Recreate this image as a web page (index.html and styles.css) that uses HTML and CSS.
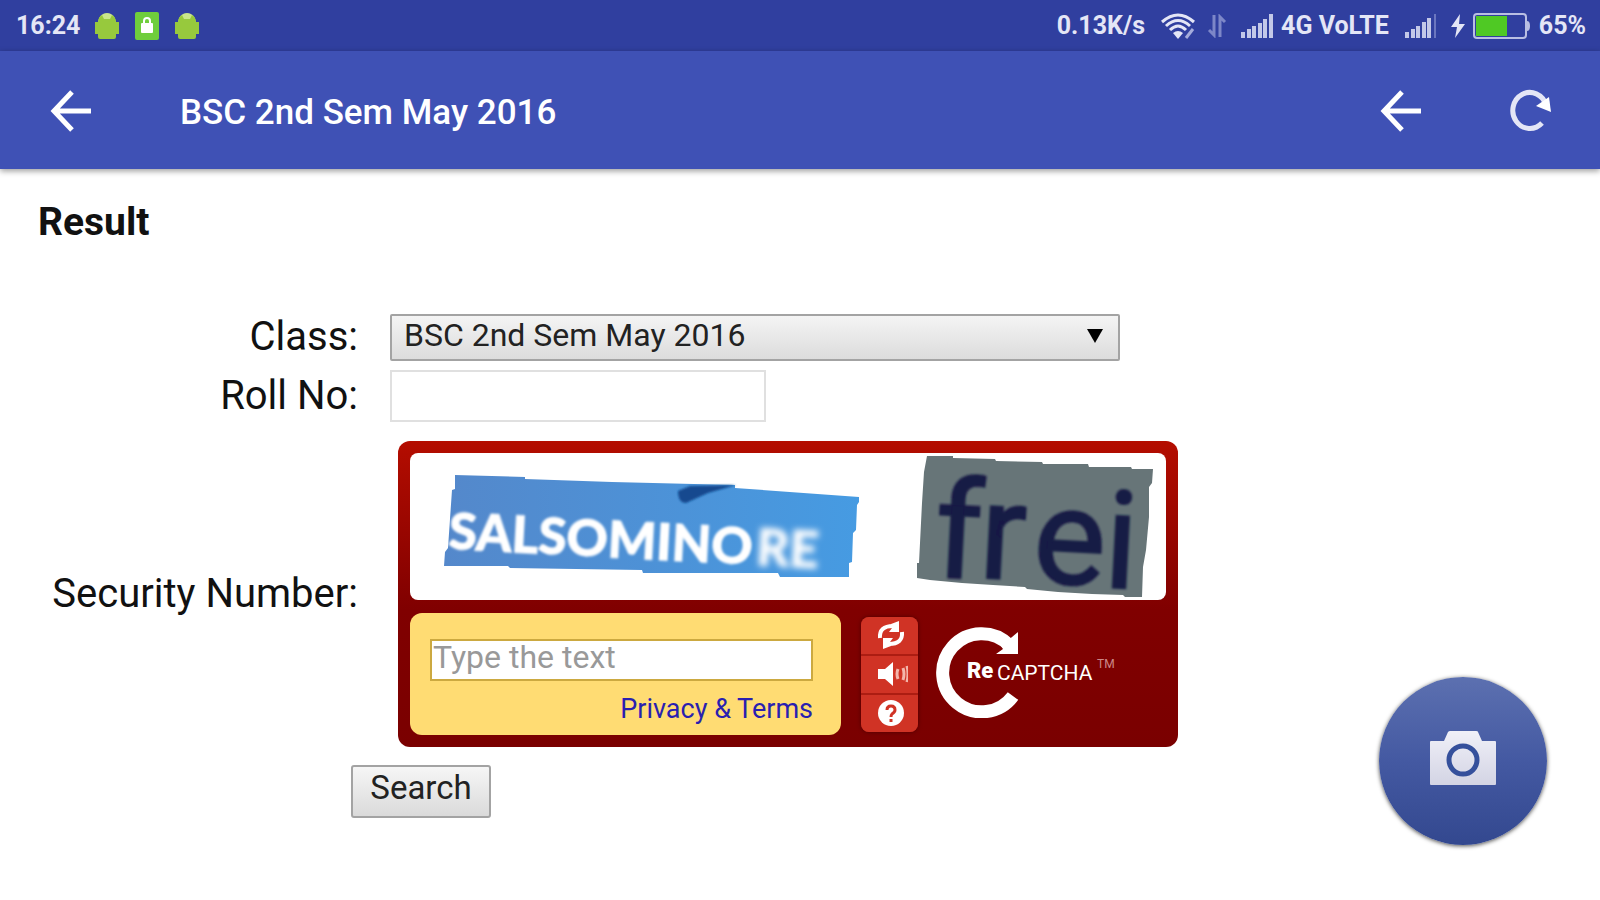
FILE: index.html
```html
<!DOCTYPE html>
<html lang="en">
<head>
    <meta charset="UTF-8">
    <meta name="viewport" content="width=device-width, initial-scale=1.0">
    <title>BSC 2nd Sem May 2016</title>
    <link rel="stylesheet" href="styles.css">
</head>
<body>
    <div class="status-bar">
        <div class="status-group">
            <span>16:24</span>
            <div class="notifications">
                <svg class="notif" viewBox="0 0 26 30">
                    <path fill="#c8e68a" d="M4 13C4 7 7 2 13 2s9 5 9 11z"/>
                    <path fill="#97c93d" d="M1 11h24v12h-3v3q0 2-2 2H6q-2 0-2-2v-3H1zM4 12q0-6 4-8l2 4h6l2-4q4 2 4 8z"/>
                </svg>
                <svg class="notif" viewBox="0 0 26 30">
                    <rect x="1" y="1" width="24" height="28" rx="2" fill="#6fce3c"/>
                    <path fill="none" stroke="#fff" stroke-width="2" d="M10 13V10a3 3 0 0 1 6 0v3"/>
                    <rect x="7" y="12" width="12" height="10" rx="1" fill="#fff"/>
                </svg>
                <svg class="notif" viewBox="0 0 26 30">
                    <path fill="#c8e68a" d="M4 13C4 7 7 2 13 2s9 5 9 11z"/>
                    <path fill="#97c93d" d="M1 11h24v12h-3v3q0 2-2 2H6q-2 0-2-2v-3H1zM4 12q0-6 4-8l2 4h6l2-4q4 2 4 8z"/>
                </svg>
            </div>
        </div>
        <div class="status-group status-right">
            <span>0.13K/s</span>
            <svg class="wifi" viewBox="0 0 34 26">
                <g fill="none" stroke="#e4e6f6" stroke-width="3">
                    <path d="M1 9Q17-5 33 9"/>
                    <path d="M5 13Q17 2 29 13"/>
                    <path d="M9 17Q17 9 25 17"/>
                </g>
                <path fill="#e4e6f6" d="M12 20q5-4 10 0l-5 6z"/>
                <path stroke="#a5acdc" stroke-width="3" d="M25 25l7-9"/>
            </svg>
            <svg class="updown" viewBox="0 0 20 24">
                <path fill="none" stroke="#7d87c8" stroke-width="3" d="M7 1v20L2 16M13 23V3l5 5"/>
            </svg>
            <svg class="signal" viewBox="0 0 32 24">
                <path stroke="#c3c8e8" stroke-width="4" d="M2 24v-6M8 24v-9M13 24V12M19 24V9M24 24V5M30 24V0"/>
            </svg>
            <span>4G VoLTE</span>
            <svg class="signal second" viewBox="0 0 32 24">
                <path stroke="#c3c8e8" stroke-width="4" d="M2 24v-6M8 24v-9M13 24V12M19 24V8M24 24V4"/>
                <path stroke="#6b76bf" stroke-width="2" d="M30 24V0"/>
            </svg>
            <svg class="bolt" viewBox="0 0 14 24"><path fill="#e4e6f6" d="M9 0L0 13h6L4 24l10-14H8z"/></svg>
            <svg class="battery" viewBox="0 0 58 28">
                <rect x="1" y="2" width="52" height="24" rx="3" fill="none" stroke="#b9bfe3" stroke-width="2"/>
                <rect x="3" y="4" width="31" height="20" fill="#4fc924"/>
                <path fill="#b9bfe3" d="M54 9q3 0 3 5t-3 5z"/>
            </svg>
            <span>65%</span>
        </div>
    </div>

    <header class="app-bar">
        <button class="icon-btn" type="button" aria-label="Back">
            <svg viewBox="0 0 44 44"><path d="M41 22H5M22 3L4 22l18 19"/></svg>
        </button>
        <h1>BSC 2nd Sem May 2016</h1>
        <button class="icon-btn" type="button" aria-label="Previous page">
            <svg viewBox="0 0 44 44"><path d="M41 22H5M22 3L4 22l18 19"/></svg>
        </button>
        <button class="icon-btn reload" type="button" aria-label="Reload">
            <svg viewBox="0 0 44 44">
                <path class="arc" d="M38 16A17 18 0 1 0 34 34"/>
                <path class="tip" d="M41 8l2 15-15-6z"/>
            </svg>
        </button>
    </header>

    <main>
        <h2>Result</h2>
        <form class="result-form">
            <label for="class">Class:</label>
            <div class="select-wrap">
                <select id="class">
                    <option>BSC 2nd Sem May 2016</option>
                </select>
            </div>

            <label for="roll">Roll No:</label>
            <input class="roll" id="roll" type="text">

            <label for="captcha">Security Number:</label>
            <div class="captcha">
                <div class="captcha-words">
                    <svg viewBox="0 0 756 147" role="img" aria-label="Captcha words">
                        <defs>
                            <linearGradient id="sky" x1="0" x2="1">
                                <stop offset="0" stop-color="#5488cb"/>
                                <stop offset="1" stop-color="#469be2"/>
                            </linearGradient>
                            <filter id="soft"><feGaussianBlur stdDeviation="1"/></filter>
                            <filter id="softer"><feGaussianBlur stdDeviation="3"/></filter>
                        </defs>
                        <path fill="url(#sky)" d="M45 22L115 24V26L202 29 325 32V35L449 44V49L447 52 446 77 443 80 442 109 439 110V124H370L368 120H233L232 117 100 115 98 113H34L35 99 38 95 42 37 45 36z"/>
                        <path fill="#124a8f" filter="url(#soft)" d="M268 38l12-5 46-1-28 8-22 10q-8 0-8-12z"/>
                        <g class="word-one" transform="rotate(3 40 96)">
                            <text x="38" y="96" filter="url(#soft)">SALSOMINO</text>
                            <text x="346" y="96" filter="url(#softer)">RE</text>
                        </g>
                        <path fill="#677578" d="M517 3H543V5L585 6 586 8 632 9 633 11H678L679 14H721L722 16H743L742 30 739 34V64L736 97 733 114 732 144H715L713 142 682 141 648 139 617 136 615 134 583 132 552 130 520 127 507 125V110H509L512 50 514 19z"/>
                        <g class="word-two" transform="rotate(3 520 120)" filter="url(#soft)">
                            <text x="523" y="123">f</text>
                            <text x="568" y="122">r</text>
                            <text x="622" y="124">e</text>
                            <text x="693" y="125">i</text>
                        </g>
                    </svg>
                </div>
                <div class="captcha-bottom">
                    <div class="captcha-entry">
                        <input id="captcha" type="text" placeholder="Type the text">
                        <a href="#">Privacy &amp; Terms</a>
                    </div>
                    <div class="captcha-tools">
                        <button type="button" aria-label="Get a new challenge">
                            <svg viewBox="0 0 32 28">
                                <path fill="none" stroke="#fff" stroke-width="4" d="M4 17Q3 5 17 5M26 11Q27 23 13 23"/>
                                <path fill="#fff" d="M23 0v11H13l3-4-1-4zM7 28V17h10l-3 4 1 4z"/>
                            </svg>
                        </button>
                        <button type="button" aria-label="Get an audio challenge">
                            <svg viewBox="0 0 32 28">
                                <path fill="#fff" d="M2 9h7l8-7v24l-8-7H2z"/>
                                <path fill="none" stroke="#f3b5ab" stroke-width="3" d="M22 9q-2 5 0 10M27 8q2 6 0 12M31 6q2 8 0 16"/>
                            </svg>
                        </button>
                        <button type="button" aria-label="Help">
                            <svg viewBox="0 0 32 28">
                                <circle cx="15" cy="14" r="13" fill="#fff"/>
                                <path fill="none" stroke="#d03325" stroke-width="3" d="M11 11q0-4 4-4t4 4q0 2-3 4-1 1-1 3M15 20v3"/>
                            </svg>
                        </button>
                    </div>
                    <svg class="captcha-logo" viewBox="0 0 184 94" role="img" aria-label="reCAPTCHA">
                        <path fill="none" stroke="#fff" stroke-width="13" d="M73 21A39 39 0 1 0 77 72"/>
                        <path fill="#fff" d="M82 8v22H60l7-5-5-9 8 2z"/>
                        <text class="logo-re" x="31" y="54">Re</text>
                        <text class="logo-name" x="61" y="56">CAPTCHA</text>
                        <text class="logo-tm" x="161" y="44">TM</text>
                    </svg>
                </div>
            </div>

            <button class="search" type="submit">Search</button>
        </form>
    </main>

    <button class="fab" type="button" aria-label="Take screenshot">
        <svg viewBox="0 0 70 58">
            <defs>
                <linearGradient id="silver" x1="0" y1="0" x2="0" y2="1">
                    <stop offset="0" stop-color="#f0f0f8"/>
                    <stop offset="1" stop-color="#d3d4e4"/>
                </linearGradient>
            </defs>
            <path fill="url(#silver)" d="M3 11h13l4-9q1-1 2-1h26q2 0 2 1l4 9h13q1 0 1 1v42q0 1-1 1H3q-1 0-1-1V12q0-1 1-1z"/>
            <circle cx="35" cy="30" r="14" fill="none" stroke="#35509c" stroke-width="5"/>
        </svg>
    </button>
</body>
</html>
```
FILE: styles.css
```css
* {
    box-sizing: border-box;
}

body {
    margin: 0;
    min-height: 100vh;
    background-color: #fff;
    color: #111;
    font-family: Roboto, sans-serif;
}

button,
input,
select {
    font-family: inherit;
}

svg {
    display: block;
    flex: none;
}

/* Status bar */
.status-bar {
    display: flex;
    justify-content: space-between;
    align-items: center;
    height: 51px;
    padding: 0 14px 0 16px;
    background-color: #303f9f;
    color: #e4e6f6;
    font-size: 25px;
    font-weight: 700;
}

.status-group {
    display: flex;
    align-items: center;
    gap: 14px;
}

.notifications {
    display: flex;
    gap: 14px;
}

.notif {
    width: 26px;
    height: 30px;
}

.status-right {
    gap: 8px;
}

.wifi {
    width: 34px;
    height: 26px;
    margin: 0 4px 0 8px;
}

.updown {
    width: 20px;
    height: 24px;
    margin-right: 6px;
}

.signal {
    width: 32px;
    height: 24px;
}

.signal.second {
    margin: 0 6px 0 8px;
}

.bolt {
    width: 14px;
    height: 24px;
}

.battery {
    width: 58px;
    height: 28px;
}

/* App bar */
.app-bar {
    display: flex;
    align-items: center;
    height: 118px;
    padding: 2px 48px 0 50px;
    background-color: #3f51b5;
    box-shadow: 0 2px 6px rgba(0, 0, 0, 0.4);
}

.app-bar h1 {
    flex: 1;
    margin: 0 0 0 86px;
    padding-top: 2px;
    color: #fff;
    font-size: 35px;
    font-weight: 500;
}

.icon-btn {
    padding: 0;
    border: 0;
    background: none;
}

.icon-btn svg {
    width: 44px;
    height: 44px;
}

.icon-btn path {
    fill: none;
    stroke: #fff;
    stroke-width: 5;
}

.icon-btn.reload {
    margin-left: 84px;
}

.icon-btn .arc {
    stroke: #e4e6f6;
}

.icon-btn .tip {
    fill: #fff;
    stroke: none;
}

/* Result form */
main {
    padding: 30px 38px;
}

h2 {
    margin: 0;
    font-size: 39px;
    font-weight: 700;
    line-height: 46px;
}

.result-form {
    display: grid;
    grid-template-columns: 320px 1fr;
    align-items: center;
    justify-items: start;
    column-gap: 32px;
    margin-top: 68px;
}

.result-form label {
    justify-self: end;
    font-size: 40px;
    line-height: 48px;
}

.select-wrap {
    position: relative;
    width: 730px;
    max-width: 100%;
}

.select-wrap::after {
    content: "";
    position: absolute;
    top: 15px;
    right: 17px;
    border: 8px solid transparent;
    border-top: 14px solid #000;
    border-bottom: 0;
    pointer-events: none;
}

select {
    display: block;
    width: 100%;
    height: 47px;
    padding: 0 12px 7px;
    border: 2px solid #a3a3a3;
    border-radius: 2px;
    appearance: none;
    background: linear-gradient(#f4f4f4, #dcdcdc);
    color: #222;
    font-size: 32px;
}

.roll {
    width: 376px;
    height: 52px;
    margin: 9px 0;
    border: 2px solid #e0e0e0;
    background-color: #fff;
    font-size: 32px;
}

/* Captcha widget */
.captcha {
    width: 780px;
    max-width: 100%;
    margin: 10px 0 10px 8px;
    padding: 12px;
    border-radius: 12px;
    background: linear-gradient(#b40d00, #800000 55%, #7a0000);
}

.captcha-words {
    border-radius: 8px;
    background-color: #fff;
}

.captcha-words svg {
    width: 100%;
    overflow: visible;
}

.word-one {
    fill: #fff;
    stroke: #fff;
    stroke-width: 1px;
    font-family: Lato, sans-serif;
    font-size: 51px;
    font-weight: 900;
}

.word-two {
    fill: #151a45;
    stroke: #151a45;
    stroke-width: 2px;
    font-family: Roboto, sans-serif;
    font-size: 136px;
    font-weight: 400;
}

.captcha-bottom {
    display: flex;
    align-items: center;
    margin-top: 13px;
}

.captcha-entry {
    display: flex;
    flex-direction: column;
    align-items: flex-end;
    gap: 12px;
    width: 431px;
    height: 122px;
    padding: 26px 28px 0 20px;
    border-radius: 12px;
    background-color: #ffdc73;
}

.captcha-entry input {
    width: 100%;
    height: 42px;
    padding: 0 1px 7px;
    border: 2px solid #cca940;
    background-color: #fff;
    font-size: 32px;
}

.captcha-entry input::placeholder {
    color: #999;
}

.captcha-entry a {
    color: #2a1fb0;
    font-size: 27px;
    line-height: 32px;
    text-decoration: none;
}

.captcha-tools {
    display: flex;
    flex-direction: column;
    gap: 2px;
    margin: 0 18px 0 20px;
    border-radius: 8px;
    background-color: #ac1d12;
    box-shadow: 0 0 4px #4d0000;
    overflow: hidden;
}

.captcha-tools button {
    width: 57px;
    height: 37px;
    padding: 0 12px 0 15px;
    border: 0;
    background-color: #d03325;
}

.captcha-tools svg {
    width: 32px;
    height: 28px;
}

.captcha-logo {
    width: 184px;
    height: 94px;
    margin-bottom: 6px;
}

.captcha-logo text {
    fill: #fff;
    font-family: Roboto, sans-serif;
}

.captcha-logo .logo-re {
    font-size: 22px;
    font-weight: 900;
}

.captcha-logo .logo-name {
    font-size: 21px;
}

.captcha-logo .logo-tm {
    fill: #c88;
    font-size: 12px;
}

.search {
    grid-column: 1 / -1;
    width: 140px;
    height: 53px;
    margin: 8px 0 0 313px;
    padding: 0 0 8px;
    border: 2px solid #a3a3a3;
    border-radius: 3px;
    background: linear-gradient(#f6f6f6, #dadada);
    color: #222;
    font-size: 33px;
}

/* Floating camera button */
.fab {
    position: fixed;
    right: 53px;
    bottom: 55px;
    display: flex;
    justify-content: center;
    align-items: center;
    width: 168px;
    height: 168px;
    padding: 0 0 4px;
    border: 0;
    border-radius: 50%;
    background: linear-gradient(#5c70b0, #4459a2 50%, #33488f);
    box-shadow: 0 1px 4px rgba(0, 0, 0, 0.7);
}

.fab svg {
    width: 70px;
    height: 58px;
}
```
